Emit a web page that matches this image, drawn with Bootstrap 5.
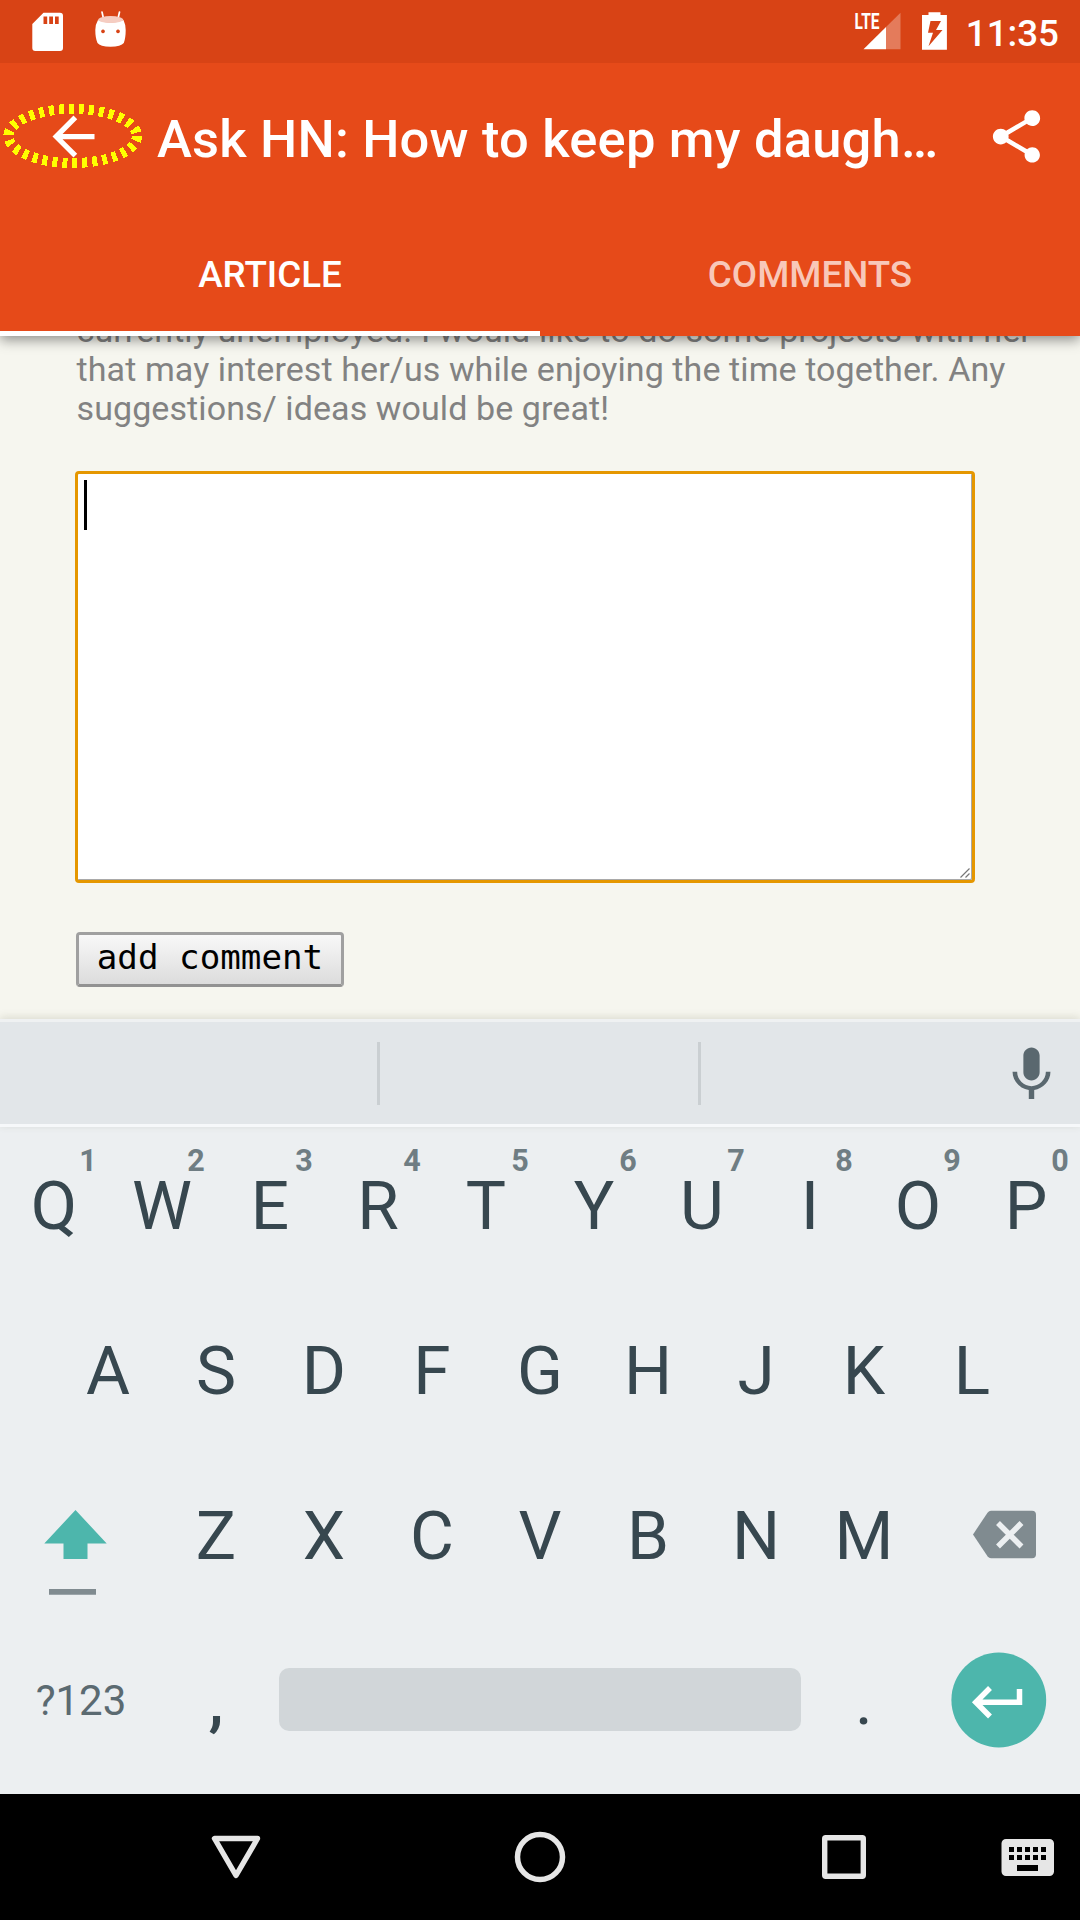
<!DOCTYPE html>
<html lang="en">
<head>
<meta charset="utf-8">
<meta name="viewport" content="width=device-width, initial-scale=1">
<title>Ask HN</title>
<link href="https://cdn.jsdelivr.net/npm/bootstrap@5.3.0/dist/css/bootstrap.min.css" rel="stylesheet">
<style>
  body { font-family: Roboto, sans-serif; width: 1080px; height: 1920px; overflow: hidden; background: #f6f6ef; }
  svg { display: block; flex: none; }
  .statusbar { height: 63px; background: #d84315; padding: 0 21px 0 29px; z-index: 3; }
  .clock { font-size: 36.75px; font-weight: 500; line-height: 63px; margin-left: 18px; padding-top: 3px; }
  .lte-text { font: 700 22px Roboto, sans-serif; }
  .appbar { height: 273px; background: #e64a19; box-shadow: 0 4px 12px rgba(0,0,0,.42); z-index: 2; }
  .toolbar { height: 147px; padding: 0 32px 0 42px; }
  .app-title { font-size: 52.5px; letter-spacing: .19px; font-weight: 500; line-height: 60px; margin-left: 52px; padding-top: 4px; white-space: nowrap; }
  .back-ring { left: 0; top: 37px; }
  .tab-item { height: 126px; font-size: 36.75px; font-weight: 500; border-bottom: 5px solid transparent; padding-top: 8px; }
  .tab-item.is-on { border-color: #fff; }
  .tab-item.is-off { color: #f8c8b9; }
  .article { height: 683px; padding-left: 76px; }
  .story { font-size: 34px; letter-spacing: .095px; line-height: 39px; color: #828282; margin: -25px 0 43px .5px; white-space: nowrap; }
  .reply-box { width: 900px; height: 412px; margin-left: -1px; background: #fff; border: 3px solid #e59700; border-radius: 4px; box-shadow: inset -1px -1px 0 #a9a9a9; padding: 6px; }
  .caret { width: 3px; height: 50px; background: #000; }
  .grip { right: 2px; bottom: 2px; }
  .add-btn { display: block; width: 268px; height: 55px; margin-top: 49px; padding: 0 0 4px; border: 3px solid #a0a0a0; border-bottom-color: #929292; border-radius: 4px; background: linear-gradient(#f8f8f8, #dcdcdc); font: 34.2px/1 "DejaVu Sans Mono", monospace; color: #000; }
  .suggest { height: 108px; background: #e2e6e9; border-top: 3px solid #eff1f2; border-bottom: 3px solid #f6f8fa; box-shadow: 0 -2px 8px rgba(90,90,50,.16); z-index: 1; }
  .suggest-cell { height: 63px; border-right: 3px solid #cacfd2; }
  .mic { margin-top: 2px; }
  .keyboard { height: 667px; background: #eceff1; color: #37474f; font-size: 67.5px; }
  .key-row { height: 165px; }
  .key-row.first { height: 161px; padding-bottom: 4px; }
  .key-row.middle { padding: 0 54px; }
  .key { width: 108px; height: 100%; line-height: 80px; }
  .hint { top: 16px; left: 68px; width: 40px; font-size: 30.5px; line-height: 36px; font-weight: 700; color: #6f7d83; }
  .wide { width: 162px; }
  .sym { font-size: 42px; color: #5b6a71; width: 162px; }
  .dot { padding-top: 1px; }
  .comma { font-weight: 500; }
  .space-slot { width: 540px; padding-bottom: 2px; }
  .spacebar { width: 522px; height: 63px; border-radius: 10px; background: #d1d6d9; }
  .navbar-sys { height: 126px; background: #000; }
</style>
</head>
<body class="d-flex flex-column m-0">
  <div class="statusbar position-relative d-flex align-items-center text-white">
    <svg width="110" height="63" viewBox="29 0 110 63">
      <path fill="#fff" fill-rule="evenodd" d="M43.500 12.700H60a3 3 0 0 1 3 3V48a3 3 0 0 1-3 3H35.300a3 3 0 0 1-3-3V24zM43.500 16.500V24h3.700v-7.500zm5.700 0V24h3.800v-7.500zm5.800 0V24h3.700v-7.500z"/>
      <path d="M102 12l2 9M119.500 12l-2 9" stroke="#fff" stroke-width="1.700" stroke-linecap="round"/>
      <path fill="#fff" fill-rule="evenodd" d="M98 20Q110.500 25 123.500 20Q125.500 24 125.700 30Q125.700 38 123.800 43Q121 46.500 110.500 46.700Q100 46.500 97.500 43Q95.300 38 95.300 30Q95.500 24 98 20zM103 29.500a1.900 1.900 0 1 0 .01 0zm15 0a1.900 1.900 0 1 0 .01 0z"/>
      <ellipse cx="110.700" cy="19.600" rx="12.500" ry="3.500" fill="#f5cdc2"/>
    </svg>
    <svg class="ms-auto" width="94" height="63" viewBox="854 0 94 63">
      <text class="lte-text" x="854.500" y="29.300" fill="#fff" textLength="25" lengthAdjust="spacingAndGlyphs">LTE</text>
      <path fill="#fff" d="M863.500 49.300L886 27v22.300z"/>
      <path fill="#fff" fill-opacity=".3" d="M886 27L900.500 12.700v36.600H886z"/>
      <path fill="#fff" fill-rule="evenodd" d="M928.500 12.300h12v2.700h6.400v34.800H922V15h6.500zM930.500 21l-2.500 11.700h5l-4.500 13.500L942.500 30h-6.500l5-9z"/>
    </svg>
    <span class="clock">11:35</span>
  </div>

  <header class="appbar position-relative text-white">
    <div class="toolbar d-flex align-items-center position-relative">
      <svg width="63" height="63" viewBox="0 0 24 24" fill="#fff"><path d="M20 11H7.830l5.590-5.590L12 4l-8 8 8 8 1.410-1.410L7.830 13H20v-2z"/></svg>
      <svg class="back-ring position-absolute" width="146" height="72" viewBox="0 100 146 72"><ellipse cx="72.700" cy="136" rx="64.300" ry="27" fill="none" stroke="#ff0" stroke-width="10" stroke-dasharray="5 5" shape-rendering="crispEdges"/></svg>
      <span class="app-title">Ask HN: How to keep my daugh…</span>
      <svg class="ms-auto" width="63" height="63" viewBox="0 0 24 24" fill="#fff"><path d="M18 16.080c-.76 0-1.440.3-1.960.77L8.910 12.700c.05-.23.09-.46.09-.7s-.04-.47-.09-.7l7.050-4.110c.54.5 1.250.81 2.040.81 1.660 0 3-1.340 3-3s-1.340-3-3-3-3 1.340-3 3c0 .24.040.47.090.7L8.040 9.810C7.500 9.310 6.790 9 6 9c-1.660 0-3 1.340-3 3s1.340 3 3 3c.79 0 1.500-.31 2.040-.81l7.120 4.160c-.05.21-.08.43-.08.65 0 1.610 1.310 2.920 2.920 2.920 1.610 0 2.920-1.310 2.920-2.920s-1.310-2.920-2.920-2.920z"/></svg>
    </div>
    <nav class="row g-0 text-center">
      <div class="col-6 tab-item is-on d-flex align-items-center justify-content-center">ARTICLE</div>
      <div class="col-6 tab-item is-off d-flex align-items-center justify-content-center">COMMENTS</div>
    </nav>
  </header>

  <main class="article">
    <p class="story">currently unemployed. I would like to do some projects with her<br>that may interest her/us while enjoying the time together. Any<br>suggestions/ ideas would be great!</p>
    <div class="reply-box position-relative">
      <div class="caret"></div>
      <svg class="grip position-absolute" width="10" height="10" viewBox="0 0 10 10" stroke="#777" stroke-width="1.200"><path d="M.5 9.500l9-9M5.500 9.500l4-4"/></svg>
    </div>
    <button type="button" class="add-btn">add comment</button>
  </main>

  <section class="suggest d-flex align-items-center position-relative">
    <div class="suggest-cell" style="width:380px"></div>
    <div class="suggest-cell" style="width:321px"></div>
    <svg class="mic ms-auto me-3" width="65" height="65" viewBox="0 0 24 24" fill="#5a686f"><path d="M12 14.200c1.660 0 3-1.340 3-3V5c0-1.660-1.340-3-3-3S9 3.340 9 5v6.200c0 1.660 1.340 3 3 3zm5.300-3.200c0 3-2.540 5.300-5.300 5.300S6.700 14 6.700 11H5c0 3.410 2.720 6.230 6 6.720V21h2v-3.280c3.280-.48 6-3.300 6-6.720h-1.700z"/></svg>
  </section>

  <section class="keyboard">
    <div class="key-row first d-flex text-center">
      <div class="key position-relative d-flex align-items-center justify-content-center">Q<span class="hint position-absolute">1</span></div>
      <div class="key position-relative d-flex align-items-center justify-content-center">W<span class="hint position-absolute">2</span></div>
      <div class="key position-relative d-flex align-items-center justify-content-center">E<span class="hint position-absolute">3</span></div>
      <div class="key position-relative d-flex align-items-center justify-content-center">R<span class="hint position-absolute">4</span></div>
      <div class="key position-relative d-flex align-items-center justify-content-center">T<span class="hint position-absolute">5</span></div>
      <div class="key position-relative d-flex align-items-center justify-content-center">Y<span class="hint position-absolute">6</span></div>
      <div class="key position-relative d-flex align-items-center justify-content-center">U<span class="hint position-absolute">7</span></div>
      <div class="key position-relative d-flex align-items-center justify-content-center">I<span class="hint position-absolute">8</span></div>
      <div class="key position-relative d-flex align-items-center justify-content-center">O<span class="hint position-absolute">9</span></div>
      <div class="key position-relative d-flex align-items-center justify-content-center">P<span class="hint position-absolute">0</span></div>
    </div>
    <div class="key-row middle d-flex">
      <div class="key d-flex align-items-center justify-content-center">A</div>
      <div class="key d-flex align-items-center justify-content-center">S</div>
      <div class="key d-flex align-items-center justify-content-center">D</div>
      <div class="key d-flex align-items-center justify-content-center">F</div>
      <div class="key d-flex align-items-center justify-content-center">G</div>
      <div class="key d-flex align-items-center justify-content-center">H</div>
      <div class="key d-flex align-items-center justify-content-center">J</div>
      <div class="key d-flex align-items-center justify-content-center">K</div>
      <div class="key d-flex align-items-center justify-content-center">L</div>
    </div>
    <div class="key-row d-flex">
      <svg class="wide" height="165" viewBox="0 1453 162 165"><path fill="#4db6ac" d="M75.500 1510l31.200 33.500H87.500V1559h-24v-15.500H44.300z"/><path fill="#808b90" d="M49 1589h47v5.700H49z"/></svg>
      <div class="key d-flex align-items-center justify-content-center">Z</div>
      <div class="key d-flex align-items-center justify-content-center">X</div>
      <div class="key d-flex align-items-center justify-content-center">C</div>
      <div class="key d-flex align-items-center justify-content-center">V</div>
      <div class="key d-flex align-items-center justify-content-center">B</div>
      <div class="key d-flex align-items-center justify-content-center">N</div>
      <div class="key d-flex align-items-center justify-content-center">M</div>
      <svg class="wide" height="165" viewBox="918 1453 162 165"><path fill="#808b90" d="M991 1510.700h41a4 4 0 0 1 4 4v39.500a4 4 0 0 1-4 4h-41q-2 0-3.500-2L973 1534.500l14.500-21.800q1.500-2 3.500-2z"/><path d="M998 1523l23.500 23.500M1021.500 1523L998 1546.500" stroke="#eceff1" stroke-width="5.500"/></svg>
    </div>
    <div class="key-row d-flex">
      <div class="sym d-flex align-items-center justify-content-center">?123</div>
      <div class="key dot comma d-flex align-items-center justify-content-center">,</div>
      <div class="space-slot d-flex align-items-center justify-content-center"><div class="spacebar"></div></div>
      <div class="key dot d-flex align-items-center justify-content-center">.</div>
      <svg class="wide" height="165" viewBox="918 1618 162 165"><circle cx="998.800" cy="1700" r="47.400" fill="#4db6ac"/><path d="M990 1688l-14.200 14.200L990 1716.500M976 1702.200h43.500V1689" fill="none" stroke="#fff" stroke-width="5.500"/></svg>
    </div>
  </section>

  <footer class="navbar-sys">
    <svg width="1080" height="126" viewBox="0 1794 1080 126" fill="none" stroke="#e6e6e6">
      <path d="M214.500 1838.500h43L236 1875.500z" stroke-width="5.400" stroke-linejoin="round"/>
      <circle cx="540" cy="1857" r="22.500" stroke-width="5.500"/>
      <rect x="824.700" y="1837.700" width="38.600" height="38.600" rx="1" stroke-width="5.400"/>
      <path stroke="none" fill="#e6e6e6" fill-rule="evenodd" d="M1006 1839h43.500a4.500 4.500 0 0 1 4.500 4.500v28a4.500 4.500 0 0 1-4.500 4.500H1006a4.500 4.500 0 0 1-4.500-4.500v-28a4.500 4.500 0 0 1 4.500-4.500zM1009 1847v5h5v-5zm8 0v5h5v-5zm8 0v5h5v-5zm8 0v5h5v-5zm8 0v5h5v-5zM1009 1855v5h5v-5zm8 0v5h5v-5zm8 0v5h5v-5zm8 0v5h5v-5zm8 0v5h5v-5zM1017 1865v6h21v-6z"/>
    </svg>
  </footer>
<script src="https://cdn.jsdelivr.net/npm/bootstrap@5.3.0/dist/js/bootstrap.bundle.min.js"></script>
</body>
</html>
